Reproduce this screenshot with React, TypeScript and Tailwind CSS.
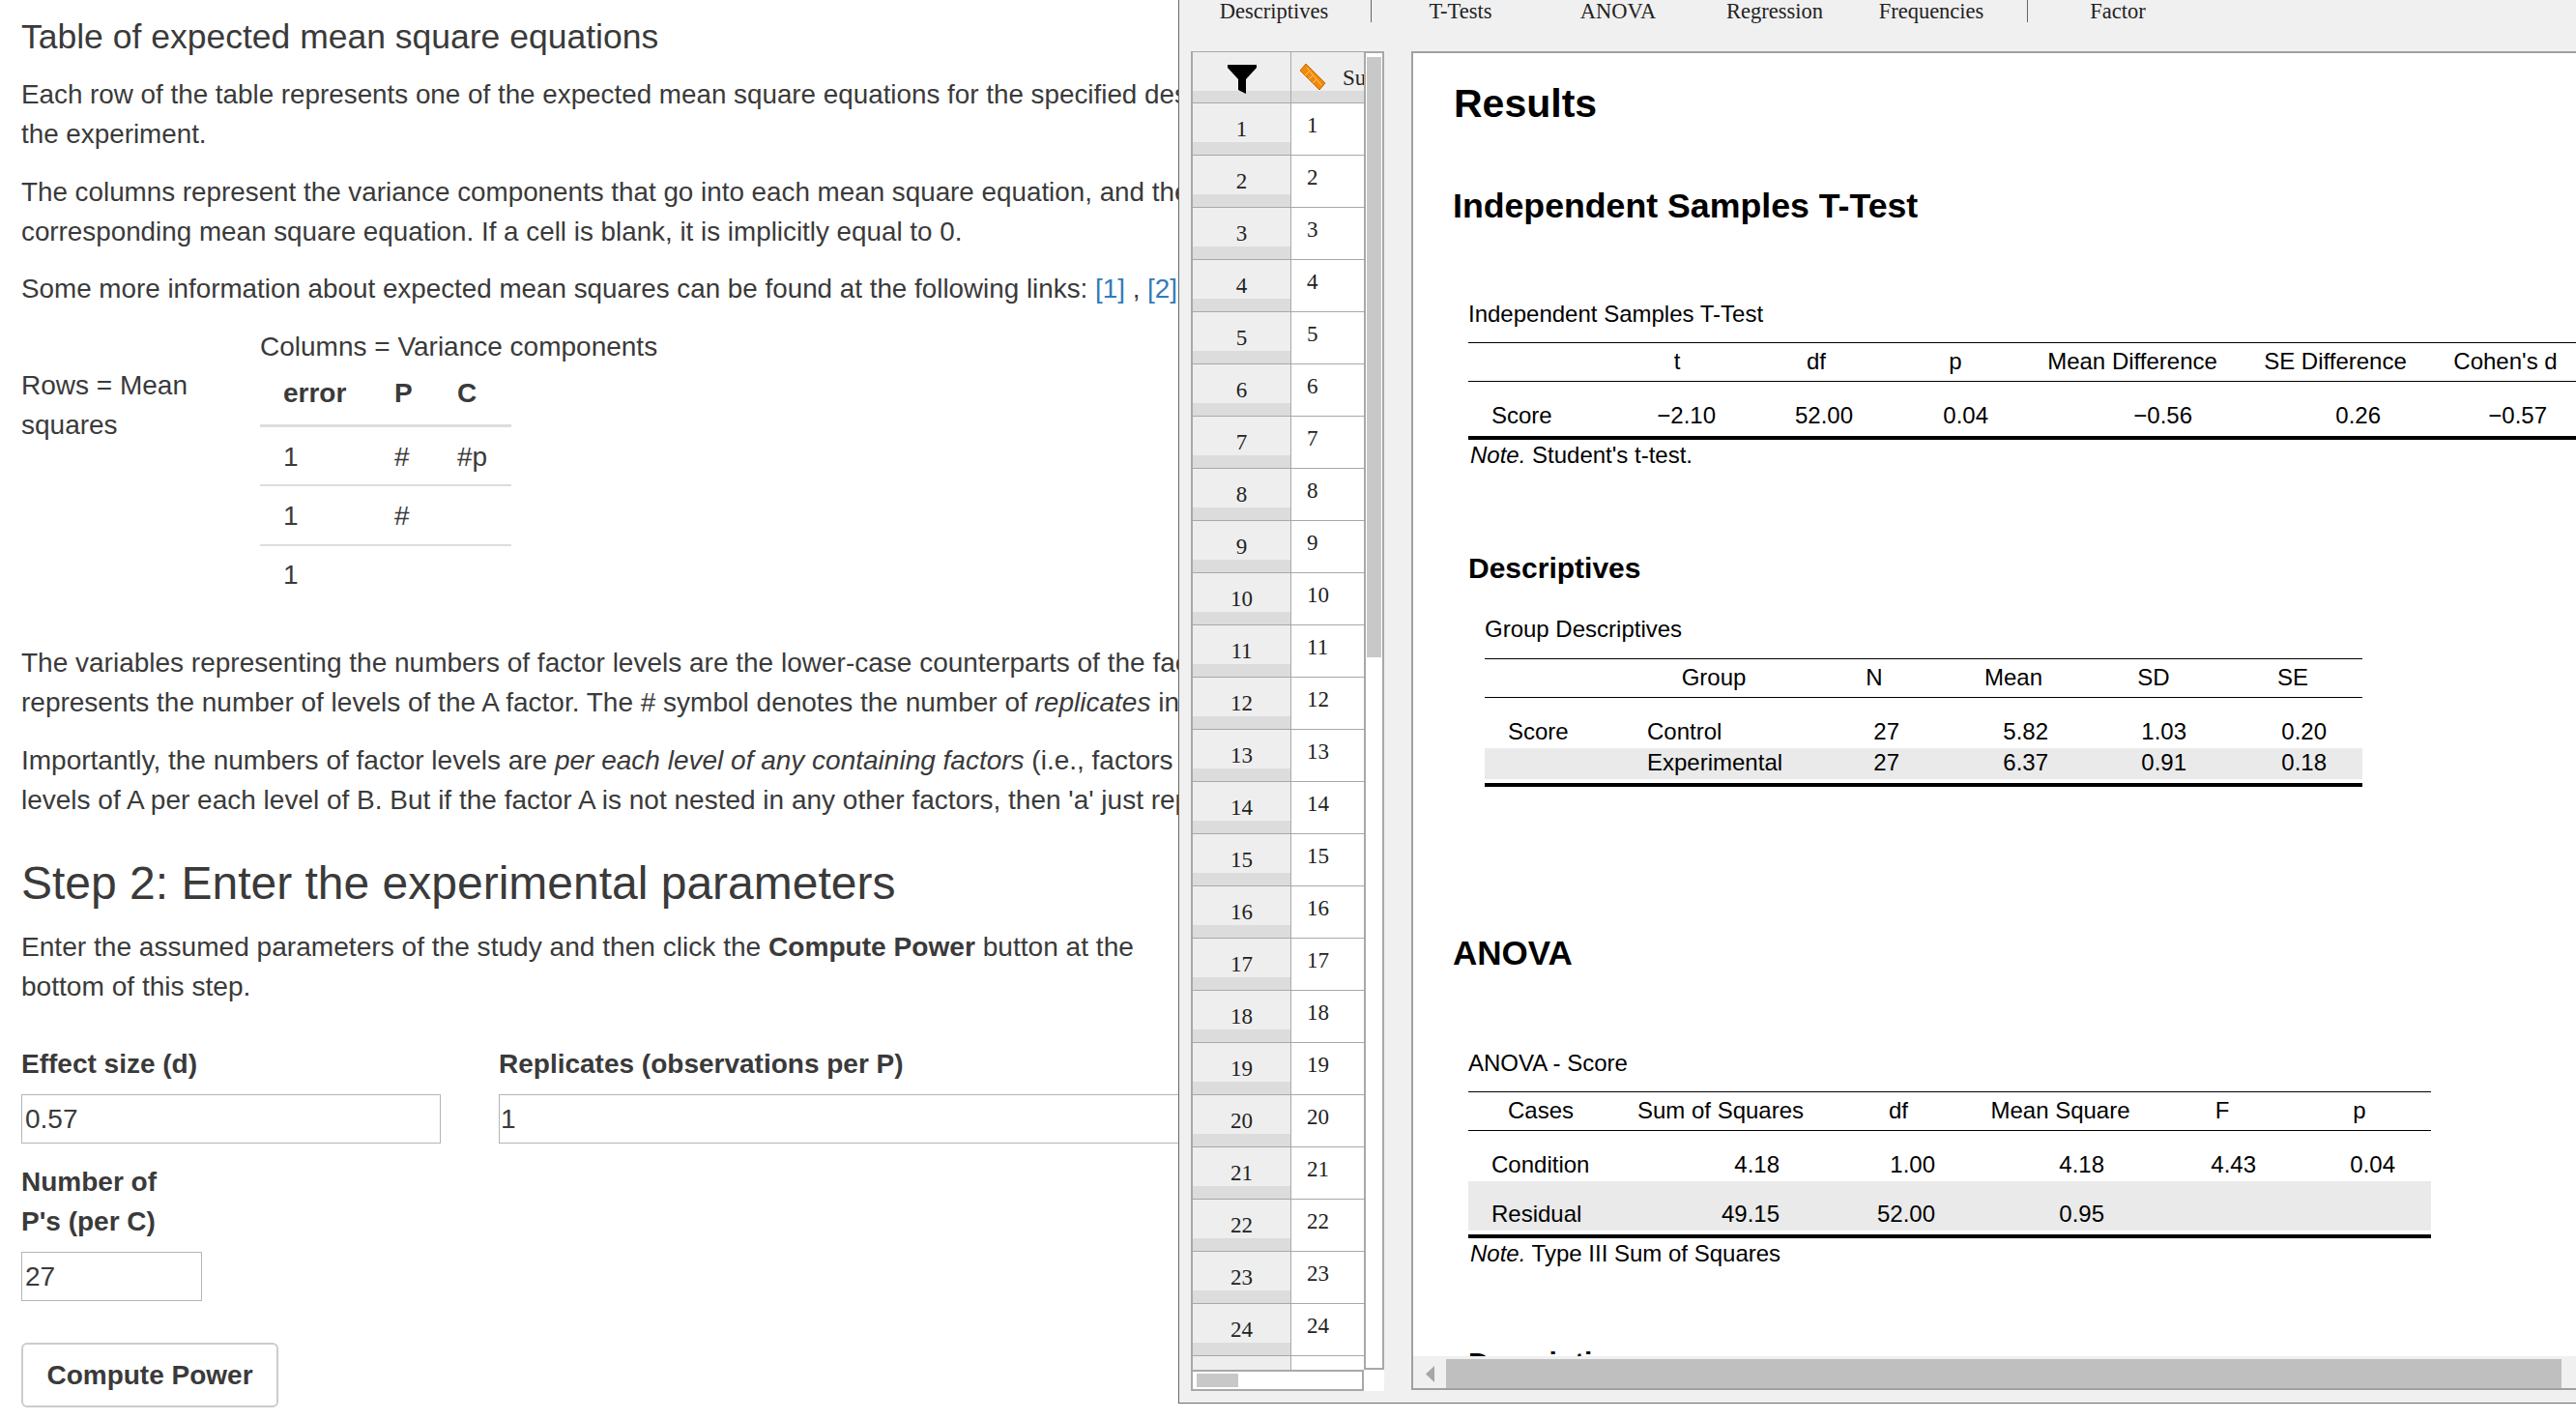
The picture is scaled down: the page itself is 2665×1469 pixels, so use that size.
const rows = Array.from({ length: 25 }, (_, i) => i + 1);

function Funnel() {
  return (
    <svg width="30" height="30" viewBox="0 0 30 30">
      <path d="M0 0H30V3L19 15V30L11 26V15L0 3Z" fill="#000" />
    </svg>
  );
}

function Ruler() {
  return (
    <svg width="26" height="27" viewBox="0 0 26 27">
      <path d="M0 7L6 0L26 20L20 27Z" fill="#f08a0c" stroke="#c96a00" strokeWidth="1" />
      <path d="M5 12L9 8M9 16L13 12M13 20L17 16M7 4L22 22" stroke="#ffc77a" strokeWidth="1" fill="none" />
    </svg>
  );
}

function Tabs() {
  return (
    <div className="flex h-[53px] shrink-0 items-start font-['Liberation_Serif',serif] text-[22.5px] leading-[24px] text-[#222]">
      <div className="w-[196px] text-center">Descriptives</div>
      <div className="ml-[2px] h-[23px] w-px bg-[#666]" />
      <div className="w-[184px] text-center">T-Tests</div>
      <div className="w-[142px] text-center">ANOVA</div>
      <div className="w-[182px] text-center">Regression</div>
      <div className="w-[142px] text-center">Frequencies</div>
      <div className="ml-[28px] h-[23px] w-px bg-[#666]" />
      <div className="w-[186px] text-center">Factor</div>
    </div>
  );
}

function DataPanel() {
  return (
    <div className="flex h-[1385px] w-[200px] shrink-0 flex-col font-['Liberation_Serif',serif] text-[23px] text-[#222]">
      <div className="flex h-[1364px] shrink-0">
        <div className="h-full w-[179px] overflow-hidden border-l-2 border-t border-[#a8a8a8] bg-white">
          <div className="flex h-[53px] border-b border-[#a8a8a8]">
            <div className="flex w-[102px] shrink-0 justify-center border-r border-[#a8a8a8] bg-[linear-gradient(#eeeeee_40px,#dcdcdc_40px)] pt-[13px]">
              <Funnel />
            </div>
            <div className="flex flex-1 items-start gap-[18px] overflow-hidden bg-[linear-gradient(#eeeeee_40px,#dcdcdc_40px)] pl-[9px] pt-[12px] leading-[30px]">
              <div className="shrink-0"><Ruler /></div>
              <span>Su</span>
            </div>
          </div>
          {rows.map((n) => (
            <div key={n} className="flex h-[54px] border-b border-[#a8a8a8]">
              <div className="w-[102px] shrink-0 border-r border-[#a8a8a8] bg-[linear-gradient(#eeeeee_40px,#dcdcdc_40px)] pt-[14px] text-center leading-[26px]">
                {n}
              </div>
              <div className="flex-1 bg-white pl-[16px] pt-[10px] leading-[26px]">{n}</div>
            </div>
          ))}
        </div>
        <div className="h-full w-[21px] border-2 border-[#a8a8a8] bg-white px-px pt-[4px]">
          <div className="h-[621px] bg-[#c8c8c8]" />
        </div>
      </div>
      <div className="flex flex-1">
        <div className="h-full w-[179px] border-2 border-[#a8a8a8] bg-white px-[4px] py-[2px]">
          <div className="h-[14px] w-[43px] bg-[#c8c8c8]" />
        </div>
        <div className="h-full w-[21px] bg-white" />
      </div>
    </div>
  );
}

type Col = { w: string; head: string; cell: string };

const ttestCols: Col[] = [
  { w: "w-[161px]", head: "", cell: "pl-[24px] text-left" },
  { w: "w-[110px]", head: "t", cell: "pr-[15px] text-right" },
  { w: "w-[178px]", head: "df", cell: "pr-[51px] text-right" },
  { w: "w-[110px]", head: "p", cell: "pr-[21px] text-right" },
  { w: "w-[256px]", head: "Mean Difference", cell: "pr-[66px] text-right" },
  { w: "w-[164px]", head: "SE Difference", cell: "pr-[35px] text-right" },
  { w: "w-[188px]", head: "Cohen's d", cell: "pr-[51px] text-right" },
];

const descCols: Col[] = [
  { w: "w-[168px]", head: "", cell: "pl-[24px] text-left" },
  { w: "w-[138px]", head: "Group", cell: "text-left" },
  { w: "w-[194px]", head: "N", cell: "pr-[71px] text-right" },
  { w: "w-[94px]", head: "Mean", cell: "pr-[11px] text-right" },
  { w: "w-[196px]", head: "SD", cell: "pr-[64px] text-right" },
  { w: "w-[92px]", head: "SE", cell: "pr-[11px] text-right" },
  { w: "w-[26px]", head: "", cell: "" },
];

const anovaCols: Col[] = [
  { w: "w-[150px]", head: "Cases", cell: "pl-[24px] text-left" },
  { w: "w-[222px]", head: "Sum of Squares", cell: "pr-[50px] text-right" },
  { w: "w-[146px]", head: "df", cell: "pr-[35px] text-right" },
  { w: "w-[189px]", head: "Mean Square", cell: "pr-[49px] text-right" },
  { w: "w-[146px]", head: "F", cell: "pr-[38px] text-right" },
  { w: "w-[138px]", head: "p", cell: "pr-[32px] text-right" },
  { w: "w-[5px]", head: "", cell: "" },
];

function ResultTable({ cols, data, width, rowClass }: { cols: Col[]; data: string[][]; width: string; rowClass: string[] }) {
  return (
    <div className={`${width} text-[24px] text-black`}>
      <div className="flex h-[41px] border-y border-black pt-[4px] leading-[30px]">
        {cols.map((c, i) => (
          <div key={i} className={`${c.w} shrink-0 text-center`}>{c.head}</div>
        ))}
      </div>
      <div className="h-px" />
      {data.map((row, r) => (
        <div key={r} className={`flex items-end leading-[30px] ${rowClass[r]}`}>
          {cols.map((c, i) => (
            <div key={i} className={`${c.w} shrink-0 ${c.cell}`}>{row[i]}</div>
          ))}
        </div>
      ))}
      <div className="mt-[4px] h-[4px] bg-black" />
    </div>
  );
}

function Results() {
  return (
    <div className="relative h-[1385px] flex-1 overflow-hidden border-y-2 border-l-2 border-[#a0a0a0] bg-white font-['Liberation_Sans',Arial,sans-serif] text-black">
      <h2 className="ml-[42px] mt-[27px] text-[41px] font-bold leading-[50px]">Results</h2>
      <h2 className="ml-[41px] mt-[59px] text-[35.7px] font-bold leading-[44px]">Independent Samples T-Test</h2>

      <div className="ml-[57px] mt-[75px] text-[24px] leading-[30px]">Independent Samples T-Test</div>
      <div className="ml-[57px] mt-[14px]">
        <ResultTable
          cols={ttestCols}
          width="w-[1167px]"
          rowClass={["h-[51px] pb-[2px]"]}
          data={[["Score", "−2.10", "52.00", "0.04", "−0.56", "0.26", "−0.57"]]}
        />
        <div className="mt-px pl-[2px] text-[24px] leading-[30px]"><i>Note.</i> Student's t-test.</div>
      </div>

      <h3 className="ml-[57px] mt-[82px] text-[30px] font-bold leading-[40px]">Descriptives</h3>
      <div className="ml-[74px] mt-[28px] text-[24px] leading-[30px]">Group Descriptives</div>
      <div className="ml-[74px] mt-[15px]">
        <ResultTable
          cols={descCols}
          width="w-[908px]"
          rowClass={["h-[51px] pb-[2px]", "h-[32px] bg-[#eaeaea] pb-[2px]"]}
          data={[
            ["Score", "Control", "27", "5.82", "1.03", "0.20", ""],
            ["", "Experimental", "27", "6.37", "0.91", "0.18", ""],
          ]}
        />
      </div>

      <h2 className="ml-[41px] mt-[147px] text-[35px] font-bold leading-[50px]">ANOVA</h2>
      <div className="ml-[57px] mt-[74px] text-[24px] leading-[30px]">ANOVA - Score</div>
      <div className="ml-[57px] mt-[14px]">
        <ResultTable
          cols={anovaCols}
          width="w-[996px]"
          rowClass={["h-[51px] pb-[2px]", "h-[51px] bg-[#eaeaea] pb-[2px]"]}
          data={[
            ["Condition", "4.18", "1.00", "4.18", "4.43", "0.04", ""],
            ["Residual", "49.15", "52.00", "0.95", "", "", ""],
          ]}
        />
        <div className="mt-px pl-[2px] text-[24px] leading-[30px]"><i>Note.</i> Type III Sum of Squares</div>
      </div>
      <h3 className="ml-[57px] mt-[78px] text-[30px] font-bold leading-[40px]">Descriptives</h3>

      {/* horizontal scrollbar sits over the results */}
      <div className="absolute bottom-0 left-0 right-0 flex h-[33px] items-end bg-[#f0f0f0]">
        <div className="flex h-[30px] w-[34px] shrink-0 items-center justify-center">
          <svg width="9" height="17" viewBox="0 0 9 17"><path d="M9 0V17L0 8.5Z" fill="#a6a6a6" /></svg>
        </div>
        <div className="h-[30px] w-[1154px] bg-[#bfbfbf]" />
      </div>
    </div>
  );
}

function Main() {
  return (
    <div className="h-full w-[1219px] overflow-hidden pl-[22px] pt-[16px] font-['Liberation_Sans',Arial,sans-serif] text-[28px] leading-[41px] text-[#3a3a3a]">
      <h3 className="whitespace-nowrap text-[35.5px] font-normal leading-[44px]">Table of expected mean square equations</h3>

      <p className="mt-[17px] whitespace-nowrap text-[27.8px]">
        Each row of the table represents one of the expected mean square equations for the specified design of
        <br />
        the experiment.
      </p>
      <p className="mt-[19px] whitespace-nowrap text-[27.8px]">
        The columns represent the variance components that go into each mean square equation, and the cells
        <br />
        corresponding mean square equation. If a cell is blank, it is implicitly equal to 0.
      </p>
      <p className="mt-[18px] whitespace-nowrap text-[27.8px]">
        Some more information about expected mean squares can be found at the following links:{" "}
        <a className="text-[#337ab7]">[1]</a> , <a className="text-[#337ab7]">[2]</a>
      </p>

      <div className="mt-[19px] flex">
        <div className="w-[247px] shrink-0 pt-[40px]">
          Rows = Mean
          <br />
          squares
        </div>
        <div>
          <div>Columns = Variance components</div>
          <table className="w-[260px] table-fixed border-collapse">
            <thead>
              <tr className="h-[61px] border-b-[3px] border-[#ddd] font-bold">
                <th className="w-[139px] pb-[4px] pl-[24px] text-left">error</th>
                <th className="w-[65px] pb-[4px] text-left">P</th>
                <th className="pb-[4px] text-left">C</th>
              </tr>
            </thead>
            <tbody>
              <tr className="h-[62px] border-b-2 border-[#ddd]">
                <td className="pl-[24px] pt-[2px]">1</td>
                <td className="pt-[2px]">#</td>
                <td className="pt-[2px]">#p</td>
              </tr>
              <tr className="h-[62px] border-b-2 border-[#ddd]">
                <td className="pl-[24px]">1</td>
                <td>#</td>
                <td />
              </tr>
              <tr className="h-[60px]">
                <td className="pl-[24px]">1</td>
                <td />
                <td />
              </tr>
            </tbody>
          </table>
        </div>
      </div>

      <p className="mt-[41px] whitespace-nowrap">
        The variables representing the numbers of factor levels are the lower-case counterparts of the factor names.
        <br />
        represents the number of levels of the A factor. The # symbol denotes the number of <i>replicates</i> in each
      </p>
      <p className="mt-[19px] whitespace-nowrap">
        Importantly, the numbers of factor levels are <i>per each level of any containing factors</i> (i.e., factors it is
        <br />
        levels of A per each level of B. But if the factor A is not nested in any other factors, then 'a' just represents
      </p>

      <h2 className="mt-[36px] text-[48px] font-normal leading-[60px]">Step 2: Enter the experimental parameters</h2>
      <p className="mt-[15px] text-[28.1px]">
        Enter the assumed parameters of the study and then click the <b>Compute Power</b> button at the
        <br />
        bottom of this step.
      </p>

      <div className="mt-[39px] flex gap-[60px]">
        <div className="w-[434px] shrink-0">
          <label className="block font-bold">Effect size (d)</label>
          <input readOnly value="0.57" className="mt-[11px] h-[51px] w-full border border-[#b5b5b5] px-[3px] text-[#3a3a3a] outline-none" />
        </div>
        <div className="w-[800px] shrink-0">
          <label className="block font-bold">Replicates (observations per P)</label>
          <input readOnly value="1" className="mt-[11px] h-[51px] w-full border border-[#b5b5b5] px-px text-[#3a3a3a] outline-none" />
        </div>
      </div>

      <div className="mt-[19px] w-[187px]">
        <label className="block font-bold">
          Number of
          <br />
          P's (per C)
        </label>
        <input readOnly value="27" className="mt-[11px] h-[51px] w-full border border-[#b5b5b5] px-[3px] text-[#3a3a3a] outline-none" />
      </div>

      <button className="mt-[43px] h-[67px] w-[266px] rounded-[6px] border-2 border-[#ccc] bg-white font-bold text-[#3a3a3a]">
        Compute Power
      </button>
    </div>
  );
}

export default function App() {
  return (
    <div className="relative h-[1469px] w-[2665px] overflow-hidden bg-white">
      <Main />
      {/* floating application window over the page */}
      <div className="absolute left-[1219px] top-0 flex h-[1452px] w-[1446px] flex-col border-b border-l border-[#696969] bg-[#f0f0f0]">
        <Tabs />
        <div className="flex pl-[12px]">
          <DataPanel />
          <div className="w-[28px] shrink-0" />
          <Results />
        </div>
      </div>
    </div>
  );
}
